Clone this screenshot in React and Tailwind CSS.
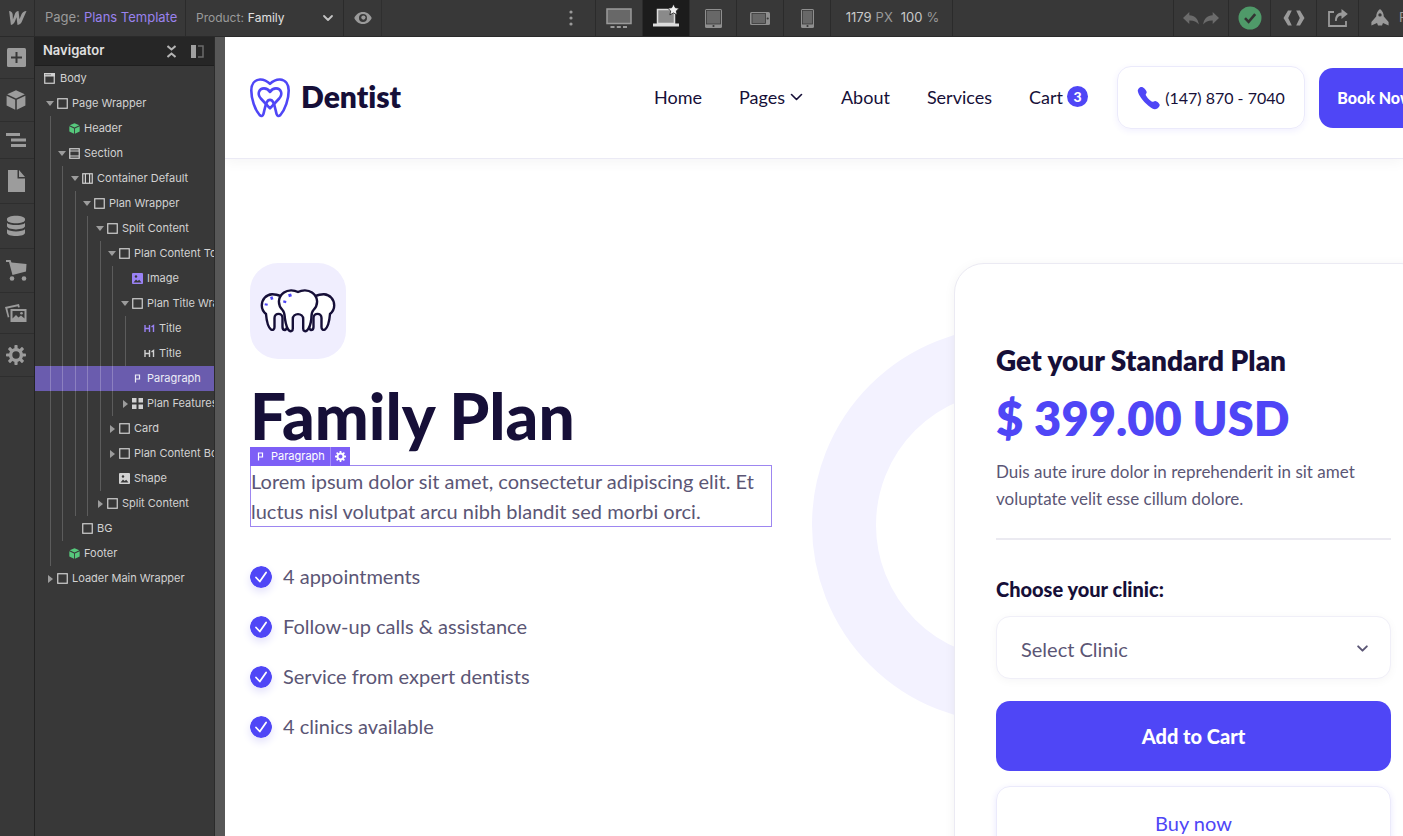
const Svg = ({ w, h, box, className = "", children }) => (
	<svg width={w} height={h} viewBox={box || `0 0 ${w} ${h}`} fill="currentColor" className={`shrink-0 ${className}`} aria-hidden="true">
		{children}
	</svg>
);

const WebflowLogo = () => (
	<Svg w={21} h={14} box="2 0 18 14">
		<path d="M20 0L15.4 10.6C14.7 12.3 13.4 14 11 14L10 6.2L8.7 9.8C8 11.8 6.6 14 4.4 14L2.6 0C4.3 0 6 1.3 6.2 3.4L6.4 8.4L8.2 3.4C8.8 1.6 10 0 12 0L13 8.2L15 3.2C15.8 1.3 17.6 0 20 0Z" />
	</Svg>
);

const Chevron = ({ w = 12, h = 8, thin, className }) => (
	<Svg w={w} h={h} box="0 0 12 8" className={className}>
		<path d="M2 2l4 4 4-4" fill="none" stroke="currentColor" strokeWidth={thin ? 1.3 : 1.8} strokeLinecap="round" strokeLinejoin="round" />
	</Svg>
);

const CubeIcon = ({ size }) => (
	<Svg w={size} h={size} box="0 0 20 20">
		<path d="M10 0.3L18.8 4.3 10 8.4 1.2 4.3zM0.6 5.8L9.2 9.8V19.7L0.6 15.4zM19.4 5.8L10.8 9.8V19.7L19.4 15.4z" />
	</Svg>
);

const GearIcon = ({ size }) => (
	<Svg w={size} h={size} box="0 0 20 20">
		<circle cx="10" cy="10" r="5.4" fill="none" stroke="currentColor" strokeWidth="3.4" />
		{[0, 45, 90, 135, 180, 225, 270, 315].map((a) => (
			<rect key={a} x="8.4" y="0" width="3.2" height="4.6" rx="0.8" transform={`rotate(${a} 10 10)`} />
		))}
	</Svg>
);

/* ---------- top bar ---------- */

const EyeIcon = () => (
	<Svg w={18} h={12}>
		<path fillRule="evenodd" d="M9 0C4.8 0 1.6 2.7 0.3 6 1.6 9.3 4.8 12 9 12s7.4-2.7 8.7-6C16.4 2.7 13.2 0 9 0zM9 2a4 4 0 110 8 4 4 0 010-8z" />
		<circle cx="9.4" cy="5.6" r="2.1" />
	</Svg>
);

const DesktopIcon = () => (
	<Svg w={26} h={21}>
		<rect x="1" y="1" width="24" height="14.5" fill="#686868" stroke="#9a9a9a" strokeWidth="1.5" />
		<path d="M4.5 18h4v2h-4zM10.8 18h4v2h-4zM17 18h4v2h-4z" fill="#9a9a9a" />
	</Svg>
);

const LaptopIcon = () => (
	<Svg w={26} h={23}>
		<rect x="4.5" y="5.5" width="17" height="14" fill="#8a8a8a" stroke="#dcdcdc" strokeWidth="1.5" />
		<path d="M0 19.5h26v3H0z" fill="#dcdcdc" />
		<path d="M20.5 0l1.8 3.7 4 .5-3 2.7.8 4-3.6-2-3.6 2 .8-4-3-2.7 4-.5z" fill="#efefef" stroke="#1c1c1c" strokeWidth="0.8" />
	</Svg>
);

const TabletIcon = () => (
	<Svg w={17} h={19}>
		<rect width="17" height="19" rx="1.5" fill="#8f8f8f" />
		<rect x="1.5" y="1.5" width="14" height="13.5" fill="#686868" stroke="#3a3a3a" strokeWidth="0.8" />
		<circle cx="8.5" cy="17" r="1.1" fill="#383838" />
	</Svg>
);

const PhoneLandscapeIcon = () => (
	<Svg w={20} h={13}>
		<rect width="20" height="13" rx="1.5" fill="#8f8f8f" />
		<rect x="2" y="1.5" width="13.5" height="10" fill="#686868" stroke="#3a3a3a" strokeWidth="0.8" />
		<circle cx="17.7" cy="6.5" r="1.1" fill="#383838" />
	</Svg>
);

const PhoneIcon = () => (
	<Svg w={13} h={19}>
		<rect width="13" height="19" rx="1.5" fill="#8f8f8f" />
		<rect x="1.5" y="1.5" width="10" height="13.5" fill="#686868" stroke="#3a3a3a" strokeWidth="0.8" />
		<circle cx="6.5" cy="17" r="1.1" fill="#383838" />
	</Svg>
);

const UndoArrow = ({ flip }) => (
	<Svg w={16} h={13}>
		<path transform={flip ? "matrix(-1 0 0 1 16 0)" : undefined} d="M6.3 0v3.3c5.4.2 8.7 3.3 9.5 9.2C13.6 9.6 10.8 8.4 6.3 8.5V12L0 6z" />
	</Svg>
);

const RocketIcon = () => (
	<Svg w={18} h={18}>
		<path fillRule="evenodd" d="M9 0c2.4 1.8 3.7 4.4 3.8 7.6L17.600 13v3.600L12 14l-1 2.500H7L6 14 .4 16.600V13l4.800-5.400C5.300 4.400 6.600 1.800 9 0zm0 4.200a1.700 1.700 0 100 3.400 1.700 1.700 0 000-3.400z" />
	</Svg>
);

const devices = [
	{ name: "Base breakpoint", icon: <DesktopIcon /> },
	{ name: "Desktop", icon: <LaptopIcon />, active: true },
	{ name: "Tablet", icon: <TabletIcon /> },
	{ name: "Mobile landscape", icon: <PhoneLandscapeIcon /> },
	{ name: "Mobile portrait", icon: <PhoneIcon /> },
];

function TopBar() {
	return (
		<div className="h-[37px] shrink-0 flex bg-[#383838] border-b border-[#2a2a2a] text-[#9a9a9a] text-[13px] overflow-hidden">
			<button aria-label="Webflow menu" className="w-[35px] shrink-0 flex items-center justify-center border-r border-[#2b2b2b]">
				<WebflowLogo />
			</button>
			<div className="w-[151px] shrink-0 pl-[10px] flex items-center gap-1 whitespace-nowrap border-r border-[#2b2b2b]">
				Page: <a href="#page" className="text-[#9a82ee]">Plans Template</a>
			</div>
			<div className="relative w-[158px] shrink-0 pl-[10px] flex items-center gap-1 text-xs border-r border-[#2b2b2b]">
				<label htmlFor="product">Product:</label>
				<select id="product" className="appearance-none bg-transparent flex-1 text-[#e0e0e0] outline-none">
					<option>Family</option>
				</select>
				<Chevron className="absolute right-[9px] text-[#c4c4c4] pointer-events-none" />
			</div>
			<button aria-label="Preview" className="w-[38px] shrink-0 flex items-center justify-center border-r border-[#2f2f2f]">
				<EyeIcon />
			</button>
			<div className="flex-3" />
			<button aria-label="More" className="w-12 flex items-center justify-center">
				<Svg w={4} h={16}>
					<circle cx="2" cy="2" r="1.6" />
					<circle cx="2" cy="8" r="1.6" />
					<circle cx="2" cy="14" r="1.6" />
				</Svg>
			</button>
			<div className="flex border-l border-[#2b2b2b]">
				{devices.map((d) => (
					<button
						key={d.name}
						aria-label={d.name}
						className={`w-[47px] flex items-center justify-center border-r border-[#2b2b2b] ${d.active ? "bg-[#1c1c1c] pb-[6px]" : ""}`}
					>
						{d.icon}
					</button>
				))}
			</div>
			<div className="w-[122px] shrink-0 pl-0.5 flex items-center justify-center gap-1 border-r border-[#2b2b2b]">
				<span className="text-[#c8c8c8]">1179</span>
				<span>PX</span>
				<span className="text-[#c8c8c8] ml-1">100</span>
				<span>%</span>
			</div>
			<div className="flex-4" />
			<div className="w-[56px] flex items-center justify-center gap-1 text-[#6b6b6b] border-x border-[#2b2b2b]">
				<button aria-label="Undo"><UndoArrow /></button>
				<button aria-label="Redo"><UndoArrow flip /></button>
			</div>
			<button aria-label="Saved" className="w-[42px] flex items-center justify-center border-r border-[#2b2b2b]">
				<Svg w={24} h={24}>
					<circle cx="12" cy="12" r="11.5" fill="#4f9a69" />
					<path d="M7 12.200l3.600 3.600 6.600-7.600" fill="none" stroke="#333" strokeWidth="2.600" />
				</Svg>
			</button>
			<button aria-label="Export code" className="w-[46px] flex items-center justify-center border-r border-[#2b2b2b]">
				<Svg w={22} h={16}>
					<path d="M5 .5h3.800L5.200 8l3.600 7.500H5L.5 8zM17 .5h-3.800L16.800 8l-3.600 7.500H17L21.500 8z" />
				</Svg>
			</button>
			<button aria-label="Share" className="w-[42px] flex items-center justify-center border-r border-[#2b2b2b]">
				<Svg w={20} h={18}>
					<path d="M6 3H1v14h17v-5" fill="none" stroke="currentColor" strokeWidth="1.8" />
					<path d="M13.500 0l6.300 5-6.300 5V6.800c-3 0-4.400 1.400-4.700 5.200H7c0-5.300 2-8.300 6.500-8.600z" />
				</Svg>
			</button>
			<button className="w-[44px] flex items-center gap-[10px] pl-3 overflow-hidden">
				<RocketIcon />
				<span>Publish</span>
			</button>
		</div>
	);
}

/* ---------- left rail ---------- */

const railItems = [
	{
		name: "Add",
		icon: (
			<Svg w={19} h={19}>
				<rect width="19" height="19" rx="1.5" />
				<path d="M9.500 4v11M4 9.500h11" stroke="#383838" strokeWidth="2" />
			</Svg>
		),
	},
	{ name: "Symbols", icon: <CubeIcon size={20} /> },
	{
		name: "Navigator",
		icon: (
			<Svg w={20} h={14}>
				<path d="M0 0h14v3H0zM5 5.500h15v3H5zM5 11h15v3H5z" />
			</Svg>
		),
	},
	{
		name: "Pages",
		icon: (
			<Svg w={17} h={22}>
				<path d="M0 0h9.500v8.500H17V22H0zM11 0l6 7h-6z" />
			</Svg>
		),
	},
	{
		name: "CMS",
		icon: (
			<Svg w={18} h={22} box="0 0 18 21">
				<path d="M0 3.500C0 1.500 4 .2 9 .2s9 1.300 9 3.300v1C18 6.500 14 7.700 9 7.700S0 6.500 0 4.500zM0 7.400c1.500 1.500 5 2.100 9 2.100s7.500-.6 9-2.100v3.200c0 2-4 3.300-9 3.300s-9-1.300-9-3.300zM0 13.800c1.500 1.500 5 2.100 9 2.100s7.500-.6 9-2.100v3.400c0 2-4 3.300-9 3.300s-9-1.300-9-3.300z" />
			</Svg>
		),
	},
	{
		name: "Ecommerce",
		icon: (
			<Svg w={21} h={21}>
				<path d="M0 0h4.500l1 2.500L20.500 4l-.5 7.500L6.500 15 3 2H0z" />
				<circle cx="6" cy="18.500" r="2.300" />
				<circle cx="18" cy="18.500" r="2.300" />
			</Svg>
		),
	},
	{
		name: "Assets",
		icon: (
			<Svg w={22} h={18}>
				<path d="M0 3L14 0l.8 3.200-1.800.3-.3-1.200L2.300 4.500l2 8.500-1.500.4z" />
				<path fillRule="evenodd" d="M5.500 5H21.500V18H5.500zM7.500 7v7.500l3.500-3.500 2.500 2.500 2.500-2 3.500 3V7z" />
				<circle cx="16.500" cy="9.300" r="1.300" />
			</Svg>
		),
	},
	{ name: "Settings", icon: <GearIcon size={20} /> },
];

function Rail() {
	return (
		<nav aria-label="Tools" className="w-[35px] shrink-0 bg-[#383838] border-r border-[#232323] text-[#9c9c9c]">
			{railItems.map((item) => (
				<button key={item.name} aria-label={item.name} className="w-full py-[11px] pr-0.5 flex justify-center border-b border-[#2e2e2e]">
					{item.icon}
				</button>
			))}
		</nav>
	);
}

/* ---------- navigator ---------- */

const treeIcons = {
	box: <rect x="0.75" y="0.75" width="9.5" height="9.5" fill="none" stroke="currentColor" strokeWidth="1.2" />,
	section: (
		<g fill="none" stroke="currentColor" strokeWidth="1.2">
			<rect x="0.75" y="0.75" width="9.5" height="9.5" />
			<path d="M1 3h9M1 8h9" />
		</g>
	),
	container: (
		<g fill="none" stroke="currentColor" strokeWidth="1.2">
			<rect x="0.75" y="0.75" width="9.5" height="9.5" />
			<path d="M3.400 1v9M7.600 1v9" />
		</g>
	),
	body: (
		<g>
			<rect x="0.75" y="0.75" width="9.5" height="9.5" fill="none" stroke="currentColor" strokeWidth="1.2" />
			<path d="M0 0h11v3.500H0z" />
			<path d="M1.500 1.700h1M3.500 1.700h1M5.500 1.700h1" stroke="#383838" />
		</g>
	),
	image: (
		<g>
			<rect width="11" height="11" rx="1" />
			<path d="M1.500 9.500l2.500-3 1.700 1.500 1.500-1.200 2.300 2.700z" fill="#383838" />
			<circle cx="4" cy="3.500" r="1.200" fill="#383838" />
		</g>
	),
	h1: (
		<g fill="none" stroke="currentColor" strokeWidth="1.4">
			<path d="M1 2v7M5.500 2v7M1 5.500h4.500M7.500 3.800l2-1.300V9" />
		</g>
	),
	p: <path d="M3.500 9.500V2h4v4h-4" fill="none" stroke="currentColor" strokeWidth="1.2" />,
	grid: <path d="M0 0h4.500v4.500H0zM6.500 0H11v4.500H6.500zM0 6.500h4.500V11H0zM6.500 6.500H11V11H6.500z" />,
};

const tree = [
	{ level: 0, icon: "box", label: "Page Wrapper", arrow: "open" },
	{ level: 1, icon: "symbol", label: "Header", color: "text-[#56c87c]" },
	{ level: 1, icon: "section", label: "Section", arrow: "open" },
	{ level: 2, icon: "container", label: "Container Default", arrow: "open" },
	{ level: 3, icon: "box", label: "Plan Wrapper", arrow: "open" },
	{ level: 4, icon: "box", label: "Split Content", arrow: "open" },
	{ level: 5, icon: "box", label: "Plan Content Top", arrow: "open" },
	{ level: 6, icon: "image", label: "Image", color: "text-[#9a82f5]" },
	{ level: 6, icon: "box", label: "Plan Title Wrapper", arrow: "open" },
	{ level: 7, icon: "h1", label: "Title", color: "text-[#9a82f5]" },
	{ level: 7, icon: "h1", label: "Title" },
	{ level: 6, icon: "p", label: "Paragraph", selected: true },
	{ level: 6, icon: "grid", label: "Plan Features", arrow: "closed" },
	{ level: 5, icon: "box", label: "Card", arrow: "closed" },
	{ level: 5, icon: "box", label: "Plan Content Bottom", arrow: "closed" },
	{ level: 5, icon: "image", label: "Shape" },
	{ level: 4, icon: "box", label: "Split Content", arrow: "closed" },
	{ level: 2, icon: "box", label: "BG" },
	{ level: 1, icon: "symbol", label: "Footer", color: "text-[#56c87c]" },
	{ level: 0, icon: "box", label: "Loader Main Wrapper", arrow: "closed" },
];

const TreeIcon = ({ name }) =>
	name === "symbol" ? <CubeIcon size={11} /> : <Svg w={11} h={11}>{treeIcons[name]}</Svg>;

function TreeRow({ level, icon, label, arrow, color = "", selected }) {
	return (
		<li className={`h-[25px] pl-[15px] flex items-center whitespace-nowrap ${selected ? "bg-[#6a5cae] text-[#ececf6]" : ""}`}>
			{Array.from({ length: level }, (_, i) => (
				<span
					key={i}
					className={`h-full shrink-0 border-l ${i % 2 ? "w-[13px]" : "w-3"} ${selected ? "border-[#8c80c0]" : "border-[#5c5c5c]"}`}
				/>
			))}
			<span className="w-2 -ml-1 mr-[3px] shrink-0 flex justify-center text-[#9c9c9c]">
				{arrow === "open" && <Svg w={8} h={5}><path d="M0 0h8L4 5z" /></Svg>}
				{arrow === "closed" && <Svg w={5} h={8}><path d="M0 0v8l5-4z" /></Svg>}
			</span>
			<span className={`mr-1 ${color}`}><TreeIcon name={icon} /></span>
			{label}
		</li>
	);
}

function Navigator() {
	return (
		<aside className="w-[180px] shrink-0 bg-[#383838] border-r border-[#2b2b2b] text-[#d2d2d2] text-[11px] overflow-hidden">
			<div className="h-[29px] pl-2 pr-[10px] flex items-center gap-[15px] bg-[#262626] border-b border-[#1e1e1e]">
				<h2 className="flex-1 text-[13px] font-semibold text-[#e0e0e0]">Navigator</h2>
				<button aria-label="Collapse all">
					<Svg w={9} h={13}>
						<path d="M.5 1L4.500 4.500 8.500 1M.5 12L4.500 8.500 8.500 12" fill="none" stroke="#b4b4b4" strokeWidth="2" />
					</Svg>
				</button>
				<button aria-label="Pin panel">
					<Svg w={13} h={13}>
						<path d="M0 0h5v13H0z" fill="#a0a0a0" />
						<path d="M7 1h5v11H7" fill="none" stroke="#6b6b6b" strokeWidth="1.500" />
					</Svg>
				</button>
			</div>
			<ul>
				<li className="h-[25px] pl-[9px] flex items-center gap-[5px]">
					<TreeIcon name="body" /> Body
				</li>
				{tree.map((row, i) => (
					<TreeRow key={i} {...row} />
				))}
			</ul>
		</aside>
	);
}

/* ---------- site on the canvas ---------- */

const ToothLogo = () => (
	<svg width="40" height="40" viewBox="0 0 40 40" fill="none" stroke="#4f46f6" strokeWidth="2.6" strokeLinecap="round" strokeLinejoin="round" aria-hidden="true">
		<path d="M20 5.800C17 3 13.500 1.300 10 1.500 4.500 1.900 1.300 6.500 1.300 12.500c0 8.500 3.500 19 8.300 24.500 1.600 1.600 3.200 1.200 3.800-.8 1-3.600 1.600-8.200 3.200-11.600 1.700-3.600 5.100-3.600 6.800 0 1.600 3.400 2.200 8 3.200 11.600.6 2 2.200 2.400 3.800.8 4.800-5.500 8.300-16 8.300-24.500 0-6-3.200-10.600-8.700-11C26.500 1.300 23 3 20 5.800z" />
		<path d="M16.400 26.500L10.800 20.500C6.500 15.500 9.500 10.400 14 10.400c2.600 0 4.600 1.400 6 3.600 1.400-2.200 3.400-3.600 6-3.600 4.500 0 7.500 5.100 3.200 10.100L23.600 26.500 20 30.300z" />
	</svg>
);

const TeethIcon = () => (
	<svg width="76" height="44" viewBox="0 0 76 44" fill="#fff" stroke="#160f38" strokeWidth="2.4" strokeLinejoin="round" strokeLinecap="round" aria-hidden="true">
		<path d="M22 7.500C18 6 15 5 12 5.200 6 5.600 1.800 10.500 1.800 16.500c0 4 1.800 6.500 4.200 8.500C6.500 31 8.500 38.500 11 40.500c2 1 3.500 0 3.500-2.500V29c0-5.500 8-5.500 8 0v9c0 2 1 3 2.500 3 2-.5 2-3 3-6l2-18z" />
		<path d="M54 7.500C58 6 61 5 64 5.200c6 .4 10.200 5.300 10.200 11.300 0 4-1.800 6.500-4.200 8.500-.5 6-2.500 13.500-5 15.500-2 1-3.500 0-3.500-2.500V29c0-5.500-8-5.500-8 0v9c0 2-1 3-2.500 3-2-.5-2-3-3-6l-2-18z" />
		<path d="M38 3C34 .8 28 .6 24 3.500c-6.500 4.500-6.500 12.500-1.500 17.500 2.500 2.500 2 6 2.500 9 .7 4.500 2 9.500 4 11.500 2 1.500 3.800.5 3.800-2V30c0-6.500 10.400-6.500 10.400 0v9.500c0 2.500 1.800 3.500 3.800 2 2-2 3.800-7 4.300-11.500.3-3-.3-6.500 2.200-9 5-5 5-13-1.500-17.500C48 .6 42 .8 38 3z" />
		<path d="M6 16.500l.4-2M10.500 9.500l2.500-.8M24.500 13.800l.5-2.200M28.500 6.800l3-.9" stroke="#4f46f6" strokeWidth="3" strokeLinecap="butt" />
	</svg>
);

const CheckBadge = () => (
	<Svg w={22} h={22} className="rounded-full shadow-[0_4px_8px_#e3e1fb]">
		<circle cx="11" cy="11" r="11" fill="#4f46f6" />
		<path d="M6 11.500l3.800 4 6.300-9" fill="none" stroke="#fff" strokeWidth="1.8" strokeLinecap="round" strokeLinejoin="round" />
	</Svg>
);

function SiteHeader() {
	return (
		<header className="border-b border-[#ebeaf5] shadow-[0_2px_14px_#14142b0d]">
			<div className="w-full min-w-[1206px] h-[121px] pl-[25px] flex items-center">
				<a href="#home" className="flex items-center gap-[11px] text-[30px] leading-9 font-extrabold">
					<ToothLogo />
					<span className="pb-1">Dentist</span>
				</a>
				<nav aria-label="Site" className="ml-auto pb-0.5 flex items-center gap-[37px] text-lg">
					<a href="#home">Home</a>
					<a href="#pages" className="flex items-center gap-1">
						Pages <Chevron thin w={15} h={10} />
					</a>
					<a href="#about">About</a>
					<a href="#services">Services</a>
					<a href="#cart" className="flex items-center gap-1">
						Cart
						<span className="size-[21px] rounded-full bg-[#4f46f6] text-white text-sm font-black flex items-center justify-center">3</span>
					</a>
				</nav>
				<a
					href="tel:1478707040"
					className="ml-[29px] w-[188px] h-[63px] flex items-center justify-center gap-1 whitespace-nowrap text-base rounded-[14px] border border-[#ebeafb] shadow-[0_2px_6px_#4a3aff14]"
				>
					<Svg w={24} h={24} className="text-[#4f46f6]">
						<path d="M5 1C3 .6.600 3 .8 5c.5 5.500 11.500 17.500 17 18.200 2.300.3 5.400-2.700 4.800-4.700-.5-1.600-2.600-3.300-4.300-3.600-1.200-.1-1.700.9-2.800.9-2-.7-6-4.800-6.800-6.900 0-1.200 1.200-1.600 1-2.900C9.300 4.400 6.800 1.300 5 1z" />
					</Svg>
					(147) 870 - 7040
				</a>
				<button className="ml-[14px] w-[112px] h-[60px] shrink-0 rounded-[14px] bg-[#4f46f6] text-white text-base font-black whitespace-nowrap">Book Now</button>
			</div>
		</header>
	);
}

function PlanInfo() {
	const features = ["4 appointments", "Follow-up calls & assistance", "Service from expert dentists", "4 clinics available"];
	return (
		<div className="w-[522px] shrink-0">
			<div className="size-24 rounded-[28px] bg-[#f0eefe] flex items-center justify-center">
				<TeethIcon />
			</div>
			<h1 className="mt-[21px] text-[64px] leading-[72px] font-black">Family Plan</h1>
			<div className="relative mt-[13px] border border-[#9d86f0]">
				<div className="absolute -left-px bottom-full h-[19px] flex items-center bg-[#7d5ff6] text-white text-[11px] font-[Inter]">
					<span className="pl-[5px] pr-[5px] flex items-center gap-[5px]">
						<TreeIcon name="p" /> Paragraph
					</span>
					<button aria-label="Element settings" className="h-full px-1 border-l border-[#a48ff8]">
						<GearIcon size={11} />
					</button>
				</div>
				<p className="text-xl leading-[30px] text-[#5b5675]">
					Lorem ipsum dolor sit amet, consectetur adipiscing elit. Et luctus nisl volutpat arcu nibh blandit sed morbi orci.
				</p>
			</div>
			<ul className="mt-[35px] flex flex-col gap-5 text-xl leading-7 text-[#5b5675]">
				{features.map((f) => (
					<li key={f} className="flex items-center gap-[11px]">
						<CheckBadge />
						<span className="pb-0.5">{f}</span>
					</li>
				))}
			</ul>
		</div>
	);
}

function PlanCard() {
	return (
		<div className="relative w-[477px] shrink-0">
			<div className="absolute -left-[142px] top-16 size-[396px] rounded-full border-[64px] border-[#f3f2ff]" />
			<div className="relative bg-white rounded-[30px] border border-[#ebeaf3] shadow-[0_2px_12px_#14142b0d] pl-[41px] pr-[39px] pt-[78px] pb-20">
				<h2 className="text-[28px] leading-9 font-extrabold">Get your Standard Plan</h2>
				<div className="mt-[14px] text-[47px] leading-[52px] font-extrabold text-[#4f46f6]">$ 399.00 USD</div>
				<p className="mt-[14px] text-[17px] leading-[27px] text-[#5b5675]">Duis aute irure dolor in reprehenderit in sit amet voluptate velit esse cillum dolore.</p>
				<hr className="mt-[26px] border-t-2 border-[#ebeaf1]" />
				<form className="mt-[34px] flex flex-col">
					<label htmlFor="clinic" className="text-xl leading-[30px] font-black">Choose your clinic:</label>
					<div className="relative mt-3">
						<select
							id="clinic"
							className="appearance-none w-full h-[63px] pl-6 pt-0.5 text-xl text-[#5b5675] bg-white rounded-[14px] border border-[#f0eff8] shadow-[0_2px_10px_#14142b0a] outline-none"
						>
							<option>Select Clinic</option>
						</select>
						<Chevron w={13} h={9} className="absolute right-[22px] top-7 text-[#5b5675] pointer-events-none" />
					</div>
					<button type="button" className="mt-[22px] h-[70px] rounded-[14px] bg-[#4f46f6] text-white text-xl font-black">Add to Cart</button>
					<button type="button" className="mt-[15px] h-[76px] pb-0.5 rounded-[14px] border border-[#ebeafb] shadow-[0_2px_6px_#4a3aff1f] text-[#4f46f6] text-xl">Buy now</button>
				</form>
			</div>
		</div>
	);
}

export default function App() {
	return (
		<div className="h-screen flex flex-col overflow-hidden font-[Inter,sans-serif]">
			<TopBar />
			<div className="flex-1 min-h-0 flex">
				<Rail />
				<Navigator />
				<div className="w-[10px] shrink-0 bg-[#575757]" />
				<main className="flex-1 min-w-0 overflow-hidden bg-white text-[#160f38] font-[Lato,sans-serif] [font-variant-ligatures:none]">
					<SiteHeader />
					<section className="w-full min-w-[1206px] pl-[25px] pt-[104px] flex justify-between">
						<PlanInfo />
						<PlanCard />
					</section>
				</main>
			</div>
		</div>
	);
}
